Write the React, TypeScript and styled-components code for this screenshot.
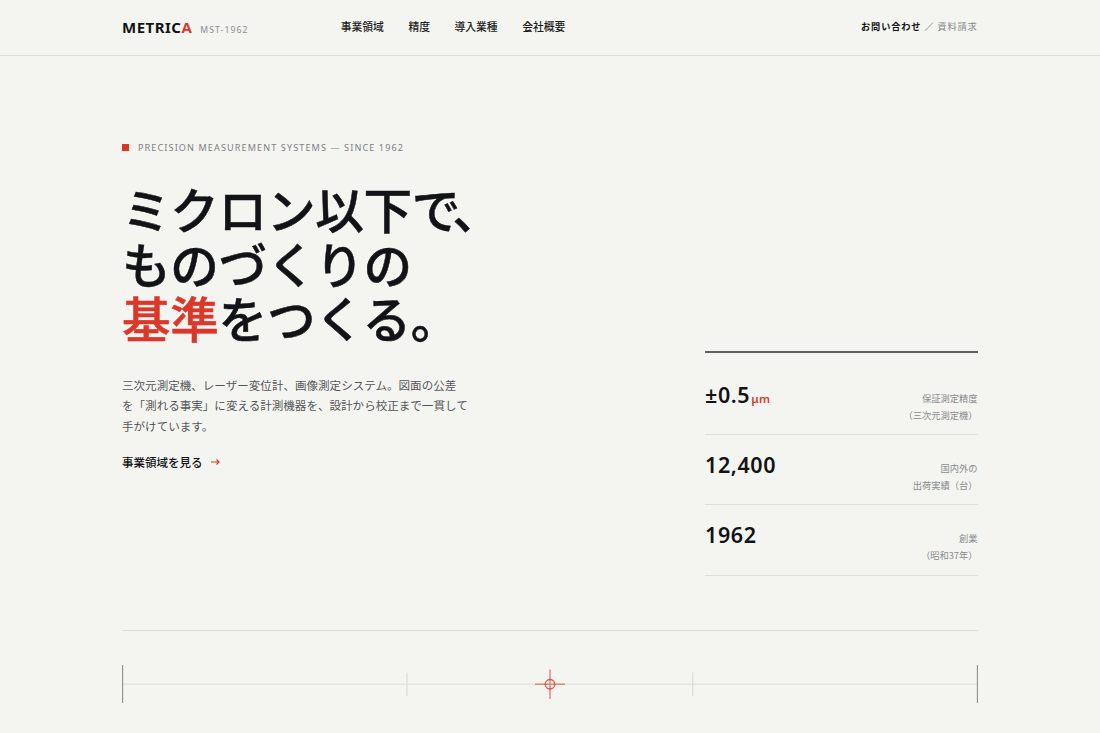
import React from "react";
import styled, { createGlobalStyle } from "styled-components";

const c = {
  paper: "#f4f5f0",
  ink: "#121317",
  body: "#54565a",
  muted: "#898b8e",
  red: "#dc382a",
  line: "#dcddd9",
};

const Global = createGlobalStyle`
  * { box-sizing: border-box; }
  body {
    margin: 0;
    background: ${c.paper};
    color: ${c.ink};
    font-family: "Noto Sans", "Noto Sans CJK JP", sans-serif;
    overflow: hidden;
  }
  h1, p { margin: 0; }
  a { color: inherit; text-decoration: none; }
`;

const Page = styled.div`
  height: 733px;
  overflow: hidden;
`;

const Header = styled.header`
  height: 56px;
  padding: 0 122.5px 0 122px;
  display: flex;
  align-items: center;
  border-bottom: 1px solid ${c.line};
`;

const Brand = styled.a`
  width: 218.7px;
  display: flex;
  align-items: baseline;
  gap: 8px;
  white-space: nowrap;
  padding-bottom: 2px;
`;

const Wordmark = styled.span`
  font-size: 15px;
  line-height: 20px;
  font-weight: 700;
  letter-spacing: 0.48px;
`;

const Accent = styled.span`
  color: ${c.red};
`;

const Code = styled.span`
  font-size: 8.6px;
  letter-spacing: 1.1px;
  color: ${c.muted};
`;

const Nav = styled.nav`
  display: flex;
  gap: 24.5px;
  font-family: "Noto Sans CJK JP", sans-serif;
  font-size: 10.8px;
  line-height: 16px;
  font-weight: 500;
  color: #1c1d21;
  padding-bottom: 4px;
`;

const Contact = styled.div`
  margin-left: auto;
  display: flex;
  font-family: "Noto Sans CJK JP", sans-serif;
  font-size: 9.2px;
  line-height: 16px;
  letter-spacing: 0.85px;
  color: ${c.muted};
  padding-bottom: 3px;
`;

const ContactMain = styled.a`
  font-weight: 700;
  color: ${c.ink};
`;

const Slash = styled.span`
  margin: 0 3px;
  color: #45474a;
`;

const Hero = styled.main`
  margin: 0 122.5px 0 122px;
  height: 575px;
  display: flex;
  justify-content: space-between;
  border-bottom: 1px solid ${c.line};
`;

const Intro = styled.section`
  padding-top: 84px;
  width: 400px;
`;

const Eyebrow = styled.p`
  display: flex;
  align-items: center;
  gap: 9px;
  font-size: 9.1px;
  line-height: 16px;
  letter-spacing: 1.1px;
  color: #7d7f83;
  white-space: nowrap;

  &::before {
    content: "";
    width: 7px;
    height: 7px;
    margin-top: -1px;
    background: ${c.red};
  }
`;

const Title = styled.h1`
  margin-top: 25px;
  font-family: "Noto Sans CJK JP", sans-serif;
  font-size: 48.6px;
  line-height: 54.5px;
  font-weight: 500;
  letter-spacing: -0.3px;
  -webkit-text-stroke: 0.5px currentColor;
  white-space: nowrap;
`;

const Tight = styled.span`
  letter-spacing: -8px;
`;

const Lead = styled.p`
  margin-top: 30px;
  font-family: "Noto Sans CJK JP", sans-serif;
  font-size: 11.55px;
  line-height: 20.8px;
  color: ${c.body};
  white-space: nowrap;
`;

const More = styled.a`
  display: inline-flex;
  align-items: center;
  gap: 8px;
  margin-top: 16px;
  font-family: "Noto Sans CJK JP", sans-serif;
  font-size: 11.5px;
  line-height: 18px;
  font-weight: 500;
`;

const Stats = styled.dl`
  width: 272.5px;
  margin: 295px 0 0;
  height: 225px;
  border-top: 2px solid #5d5e60;
  padding-top: 12px;
`;

const Stat = styled.div`
  height: 70.2px;
  display: flex;
  justify-content: space-between;
  border-bottom: 1px solid #e0e1dc;
`;

const Value = styled.dt`
  padding-top: 15px;
  font-size: 21.5px;
  line-height: 30px;
  font-weight: 600;
  letter-spacing: 0.6px;
`;

const Unit = styled.span`
  margin-left: 1px;
  font-size: 11.5px;
  letter-spacing: 0.2px;
  color: ${c.red};
`;

const Label = styled.dd`
  margin: 0;
  padding-top: 25px;
  font-family: "Noto Sans CJK JP", sans-serif;
  font-size: 9.25px;
  line-height: 16.5px;
  color: ${c.muted};
  text-align: right;
`;

const Scale = styled.svg`
  display: block;
  margin: 33px 0 0 122px;
`;

const stats = [
  { value: "±0.5", unit: "μm", label: ["保証測定精度", "（三次元測定機）"] },
  { value: "12,400", label: ["国内外の", "出荷実績（台）"] },
  { value: "1962", label: ["創業", "（昭和37年）"] },
];

export default function App() {
  return (
    <Page>
      <Global />
      <Header>
        <Brand href="#">
          <Wordmark>METRIC<Accent>A</Accent></Wordmark>
          <Code>MST-1962</Code>
        </Brand>
        <Nav>
          {["事業領域", "精度", "導入業種", "会社概要"].map((t) => (
            <a key={t} href="#">{t}</a>
          ))}
        </Nav>
        <Contact>
          <ContactMain href="#">お問い合わせ</ContactMain>
          <Slash>／</Slash>
          <a href="#">資料請求</a>
        </Contact>
      </Header>
      <Hero>
        <Intro>
          <Eyebrow>PRECISION MEASUREMENT SYSTEMS — SINCE 1962</Eyebrow>
          <Title>
            ミクロン以下<Tight>で</Tight>、<br />
            ものづくりの<br />
            <Accent>基準</Accent>をつくる。
          </Title>
          <Lead>
            三次元測定機、レーザー変位計、画像測定システム。図面の公差<br />
            を「測れる事実」に変える計測機器を、設計から校正まで一貫して<br />
            手がけています。
          </Lead>
          <More href="#">
            事業領域を見る
            <svg width="9" height="8" viewBox="0 0 9 8" fill="none" stroke={c.red} strokeWidth="1.2">
              <path d="M0 4H8M5.5 1.5L8 4L5.5 6.5" />
            </svg>
          </More>
        </Intro>
        <Stats>
          {stats.map((s) => (
            <Stat key={s.value}>
              <Value>
                {s.value}
                {s.unit && <Unit>{s.unit}</Unit>}
              </Value>
              <Label>{s.label[0]}<br />{s.label[1]}</Label>
            </Stat>
          ))}
        </Stats>
      </Hero>
      <Scale width="857" height="40" viewBox="0 0 857 40" fill="none">
        <path d="M0 20.2H856" stroke="#dfe0db" strokeWidth="1.3" />
        <path d="M285 8.5V32M570.7 8.5V32" stroke="#dcddd8" strokeWidth="1.2" />
        <path d="M.6 1V39M855.4 1V39" stroke="#8e8f8f" strokeWidth="1.1" />
        <path d="M413 20.2H443M428 5.5V35" stroke={c.red} strokeOpacity=".55" strokeWidth="1.6" />
        <circle cx="428" cy="20.2" r="4.7" stroke={c.red} strokeOpacity=".85" strokeWidth="1.3" />
      </Scale>
    </Page>
  );
}
